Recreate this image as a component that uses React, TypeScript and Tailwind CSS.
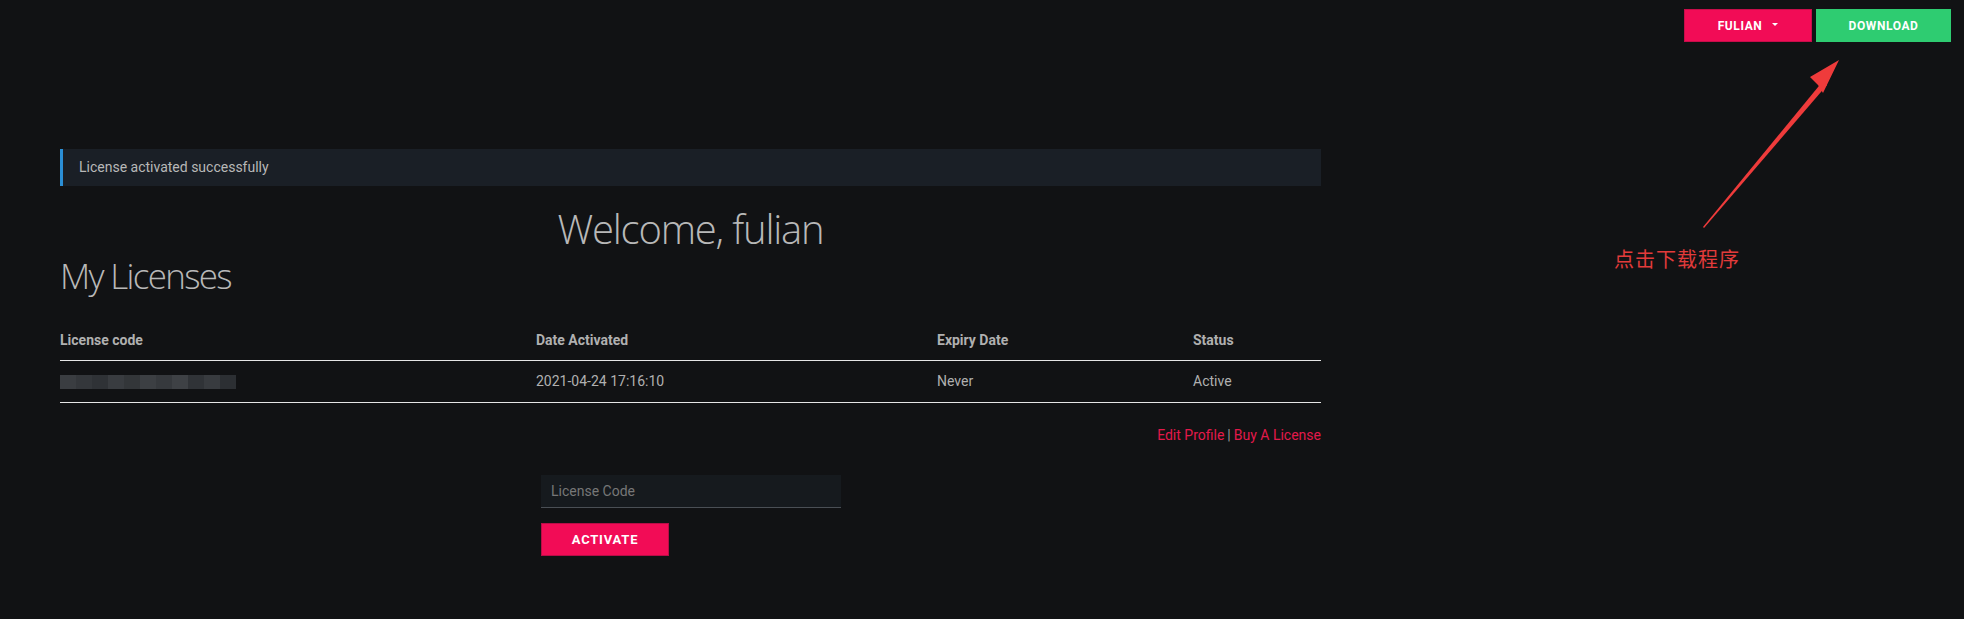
import React from 'react';

const rows = [
  { code: '', activated: '2021-04-24 17:16:10', expiry: 'Never', status: 'Active' },
];

function Caret() {
  return <span className="inline-block w-0 h-0 border-l-[3px] border-r-[3px] border-t-[3px] border-l-transparent border-r-transparent border-t-white ml-[10px] mb-[2px]" />;
}

function BlurredCode() {
  // the code is pixelated in the screenshot
  const shades = ['#3a3d41', '#34373b', '#2f3236', '#393c40', '#333639', '#3c3f43', '#36393d', '#3e4145', '#303337', '#383b3f', '#2c2f33'];
  return (
    <div className="flex items-center h-[16px]">
      {shades.map((c, i) => (
        <span key={i} className="h-[14px] w-[16px]" style={{ backgroundColor: c }} />
      ))}
    </div>
  );
}

export default function App() {
  return (
    <div className="relative min-h-[619px] bg-[#111214] font-['Roboto',sans-serif] text-[#b4b4b4] overflow-hidden">
      <div className="flex justify-end gap-[4px] pt-[9px] pr-[13px]">
        <button className="h-[33px] w-[128px] bg-[#f20c56] border border-[#c70d4a] text-white text-[12px] font-bold tracking-[0.6px] flex items-center justify-center">
          FULIAN <Caret />
        </button>
        <button className="h-[33px] w-[135px] bg-[#2ecc71] text-white text-[12px] font-bold tracking-[0.6px] flex items-center justify-center">
          DOWNLOAD
        </button>
      </div>

      <div className="ml-[60px] w-[1261px] mt-[107px]">
        <div className="h-[37px] bg-[#1a1f26] border-l-[3px] border-[#2b8fd6] flex items-center pl-[16px] text-[14px] text-[#b8b8b8]">
          License activated successfully
        </div>

        <h1 className="text-center font-['Open_Sans',sans-serif] font-light text-[40px] leading-[48px] mt-[19px] text-[#b8b8b8] tracking-[-1.2px]">
          Welcome, fulian
        </h1>
        <h2 className="font-['Open_Sans',sans-serif] font-light text-[35px] leading-[44px] mt-[1px] text-[#b8b8b8] tracking-[-1.7px]">
          My Licenses
        </h2>

        <div className="mt-[23px] text-[14px]">
          <div className="grid grid-cols-[476px_401px_256px_1fr] h-[40px] items-center border-b border-[#e6e6e6] font-bold text-[#b0b0b0]">
            <div>License code</div>
            <div>Date Activated</div>
            <div>Expiry Date</div>
            <div>Status</div>
          </div>
          {rows.map((r, i) => (
            <div key={i} className="grid grid-cols-[476px_401px_256px_1fr] h-[42px] items-center border-b border-[#e6e6e6] text-[#b0b0b0]">
              <div><BlurredCode /></div>
              <div>{r.activated}</div>
              <div>{r.expiry}</div>
              <div>{r.status}</div>
            </div>
          ))}
        </div>

        <div className="flex justify-end mt-[24px] text-[14px] leading-[16px]">
          <a className="text-[#e3194b]">Edit Profile</a>
          <span className="mx-[3px] text-[#9a9a9a]">|</span>
          <a className="text-[#e3194b]">Buy A License</a>
        </div>

        <div className="ml-[481px] mt-[32px] w-[300px]">
          <input
            placeholder="License Code"
            className="w-[300px] h-[33px] bg-[#161a1e] border-b border-[#4a4f55] px-[10px] text-[14px] text-[#bbb] placeholder-[#777] outline-none"
          />
          <button className="mt-[15px] h-[33px] w-[128px] bg-[#f20c56] border border-[#b80d47] text-white text-[13px] font-bold tracking-[0.8px]">
            ACTIVATE
          </button>
        </div>
      </div>

      {/* screenshot annotation */}
      <svg className="absolute left-0 top-0 pointer-events-none" width="1964" height="619">
        <polygon points="1703,227 1823,81 1827,85 1704,228" fill="#ef3b3b" />
        <polygon points="1839,60 1823,93 1818,85 1810,77" fill="#ef3b3b" />
      </svg>
      <div className="absolute left-[1614px] top-[246px] text-[20px] leading-[26px] tracking-[1px] text-[#e23b3b] font-['Noto_Sans_CJK_SC',sans-serif]">
        点击下载程序
      </div>
    </div>
  );
}
